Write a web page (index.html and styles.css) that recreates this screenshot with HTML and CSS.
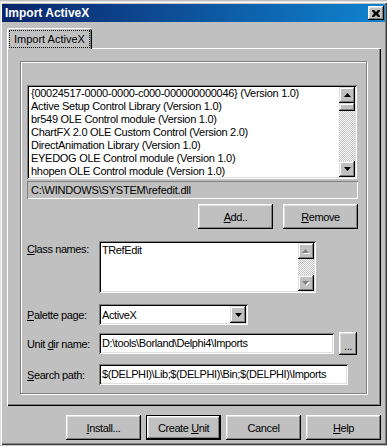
FILE: index.html
```html
<!DOCTYPE html>
<html>
<head>
<meta charset="utf-8">
<title>Import ActiveX</title>
<link rel="stylesheet" href="styles.css">
</head>
<body>
<div class="window">
  <div class="titlebar">
    <span class="title">Import ActiveX</span>
    <div class="close">
      <svg width="8" height="7" viewBox="0 0 8 7"><path d="M0 0h2l2 2 2-2h2v1l-2 2.5 2 2.5v1h-2l-2-2-2 2h-2v-1l2-2.5-2-2.5z" fill="#000"/></svg>
    </div>
  </div>
  <div class="body">
    <div class="tabs">
      <div class="tab"><span class="focus">Import ActiveX</span></div>
    </div>
    <div class="tabpage">
      <div class="group">
        <div class="listbox">
          <ul class="items">
            <li>{00024517-0000-0000-c000-000000000046} (Version 1.0)</li>
            <li>Active Setup Control Library (Version 1.0)</li>
            <li>br549 OLE Control module (Version 1.0)</li>
            <li>ChartFX 2.0 OLE Custom Control (Version 2.0)</li>
            <li>DirectAnimation Library (Version 1.0)</li>
            <li>EYEDOG OLE Control module (Version 1.0)</li>
            <li>hhopen OLE Control module (Version 1.0)</li>
          </ul>
          <div class="vscroll">
            <div class="sbtn"><svg width="7" height="4" viewBox="0 0 7 4"><path d="M3.5 0L7 4H0z" fill="#000"/></svg></div>
            <div class="thumb"></div>
            <div class="track"></div>
            <div class="sbtn"><svg width="7" height="4" viewBox="0 0 7 4"><path d="M0 0h7L3.5 4z" fill="#000"/></svg></div>
          </div>
        </div>
        <div class="pathpanel">C:\WINDOWS\SYSTEM\refedit.dll</div>
        <div class="btnrow">
          <div class="btn"><span><u>A</u>dd..</span></div>
          <div class="btn"><span><u>R</u>emove</span></div>
        </div>
        <div class="row row-class">
          <div class="label"><u>C</u>lass names:</div>
          <div class="memo">
            <div class="memotext">TRefEdit</div>
            <div class="vscroll vscroll-disabled">
              <div class="sbtn"><svg width="8" height="5" viewBox="0 0 8 5"><path d="M4.5 1L8 5H1z" fill="#fff"/><path d="M3.5 0L7 4H0z" fill="#808080"/></svg></div>
              <div class="track"></div>
              <div class="sbtn"><svg width="8" height="5" viewBox="0 0 8 5"><path d="M1 1h7L4.5 5z" fill="#fff"/><path d="M0 0h7L3.5 4z" fill="#808080"/></svg></div>
            </div>
          </div>
        </div>
        <div class="row row-palette">
          <div class="label"><u>P</u>alette page:</div>
          <div class="combo">
            <div class="combotext">ActiveX</div>
            <div class="sbtn dropbtn"><svg width="7" height="4" viewBox="0 0 7 4"><path d="M0 0h7L3.5 4z" fill="#000"/></svg></div>
          </div>
        </div>
        <div class="row row-unit">
          <div class="label">Unit <u>d</u>ir name:</div>
          <div class="edit edit-unit">D:\tools\Borland\Delphi4\Imports</div>
          <div class="btn dots"><span>...</span></div>
        </div>
        <div class="row row-search">
          <div class="label"><u>S</u>earch path:</div>
          <div class="edit edit-search">$(DELPHI)\Lib;$(DELPHI)\Bin;$(DELPHI)\Imports</div>
        </div>
      </div>
    </div>
    <div class="footer">
      <div class="btn"><span><u>I</u>nstall...</span></div>
      <div class="btn default"><span>Create <u>U</u>nit</span></div>
      <div class="btn"><span>Cancel</span></div>
      <div class="btn"><span><u>H</u>elp</span></div>
    </div>
  </div>
</div>
</body>
</html>
```

FILE: styles.css
```css
* { box-sizing: border-box; }
html, body { margin: 0; background: #c0c0c0; }
body {
  font-family: "Liberation Sans", Arial, sans-serif;
  font-size: 11px;
  letter-spacing: -0.4px;
  color: #000;
}
u { text-decoration: underline; text-underline-offset: 1px; }

.window {
  width: 387px;
  height: 444px;
  margin-top: 1px;
  padding: 3px 2px 0 2px;
  background: #c0c0c0;
  box-shadow: inset 1px 1px #dfdfdf, inset 2px 2px #fff, inset -1px -1px #404040, inset -2px -2px #808080;
}

.titlebar {
  height: 18px;
  width: 383px;
  display: flex;
  align-items: center;
  justify-content: space-between;
  padding: 0 1px 0 3px;
  background: linear-gradient(to right, #0a246a, #1084d0);
}
.title {
  color: #fff;
  font-weight: bold;
  font-size: 12px;
  letter-spacing: 0;
}
.close {
  width: 16px;
  height: 14px;
  display: flex;
  align-items: center;
  justify-content: center;
  background: #c0c0c0;
  box-shadow: inset -1px -1px #000, inset 1px 1px #fff, inset -2px -2px #808080, inset 2px 2px #dfdfdf;
}

.body { padding-left: 5px; }

.tabs {
  margin-top: 6px;
  height: 20px;
  display: flex;
  position: relative;
  z-index: 1;
}
.tab {
  width: 85px;
  height: 21px;
  background: #c0c0c0;
  border-left: 1px solid #fff;
  border-top: 1px solid #fff;
  border-top-left-radius: 2px;
  border-top-right-radius: 2px;
  box-shadow: inset -1px 0 #000, inset -2px 0 #808080, inset 1px 0 #dfdfdf;
  padding: 2px 0 0 2px;
}
.focus {
  display: inline-block;
  width: 79px;
  outline: 1px dotted #000;
  outline-offset: 0;
  padding: 1px 0 1px 4px;
  line-height: 14px;
  letter-spacing: 0;
}

.tabpage {
  width: 374px;
  height: 358px;
  padding: 13px 0 0 13px;
  box-shadow: inset 1px 1px #fff, inset -1px -1px #000, inset -2px -2px #808080;
}

.group {
  width: 347px;
  height: 333px;
  border: 1px solid #808080;
  box-shadow: 1px 1px 0 #fff, inset 1px 1px 0 #fff;
  padding: 23px 0 0 6px;
}

.listbox {
  width: 330px;
  height: 94px;
  background: #fff;
  padding: 2px;
  display: flex;
  box-shadow: inset 1px 1px #808080, inset -1px -1px #fff, inset 2px 2px #000, inset -2px -2px #dfdfdf;
}
.items {
  list-style: none;
  margin: 0;
  padding: 0 0 0 2px;
  flex: 1;
  overflow: hidden;
  line-height: 13px;
  letter-spacing: -0.28px;
  white-space: nowrap;
}

.vscroll {
  width: 16px;
  display: flex;
  flex-direction: column;
  flex-shrink: 0;
}
.sbtn {
  width: 16px;
  height: 16px;
  flex-shrink: 0;
  display: flex;
  align-items: center;
  justify-content: center;
  background: #c0c0c0;
  box-shadow: inset -1px -1px #000, inset 1px 1px #dfdfdf, inset -2px -2px #808080, inset 2px 2px #fff;
}
.thumb {
  height: 8px;
  background: #c0c0c0;
  box-shadow: inset -1px -1px #000, inset 1px 1px #dfdfdf, inset -2px -2px #808080, inset 2px 2px #fff;
}
.track {
  flex: 1;
  background: repeating-conic-gradient(#c0c0c0 0 25%, #fff 0 50%) 0 0 / 2px 2px;
}

.pathpanel {
  width: 331px;
  height: 18px;
  margin-top: 2px;
  padding: 2px 0 0 4px;
  line-height: 14px;
  letter-spacing: -0.2px;
  box-shadow: inset 1px 1px #808080, inset -1px -1px #fff;
}

.btnrow {
  width: 331px;
  margin-top: 5px;
  display: flex;
  justify-content: flex-end;
  gap: 10px;
}

.btn {
  width: 75px;
  height: 25px;
  display: flex;
  align-items: center;
  justify-content: center;
  background: #c0c0c0;
  box-shadow: inset -1px -1px #000, inset 1px 1px #fff, inset -2px -2px #808080, inset 2px 2px #dfdfdf;
}
.btn.default {
  border: 1px solid #000;
}

.row {
  display: flex;
  align-items: center;
}
.label {
  width: 72px;
  flex-shrink: 0;
}
.row-class {
  margin-top: 12px;
  align-items: flex-start;
}
.row-class .label { padding-top: 2px; }

.memo {
  width: 217px;
  height: 52px;
  background: #fff;
  padding: 2px;
  display: flex;
  box-shadow: inset 1px 1px #808080, inset -1px -1px #fff, inset 2px 2px #000, inset -2px -2px #dfdfdf;
}
.memotext {
  flex: 1;
  padding: 1px 0 0 1px;
  line-height: 13px;
}

.row-palette { margin-top: 11px; }
.combo {
  width: 149px;
  height: 21px;
  background: #fff;
  padding: 2px;
  display: flex;
  align-items: center;
  box-shadow: inset 1px 1px #808080, inset -1px -1px #fff, inset 2px 2px #000, inset -2px -2px #dfdfdf;
}
.combotext {
  flex: 1;
  padding-left: 1px;
}
.dropbtn { height: 17px; }

.edit {
  height: 21px;
  background: #fff;
  padding: 3px 0 0 3px;
  line-height: 14px;
  white-space: nowrap;
  overflow: hidden;
  box-shadow: inset 1px 1px #808080, inset -1px -1px #fff, inset 2px 2px #000, inset -2px -2px #dfdfdf;
}
.row-unit { margin-top: 7px; height: 23px; }
.edit-unit { width: 235px; }
.btn.dots {
  width: 18px;
  height: 23px;
  margin-left: 5px;
}
.btn.dots span { padding-top: 4px; }
.row-search { margin-top: 9px; }
.edit-search { width: 249px; }

.footer {
  width: 374px;
  margin-top: 9px;
  display: flex;
  justify-content: flex-end;
  gap: 5px;
}
```
